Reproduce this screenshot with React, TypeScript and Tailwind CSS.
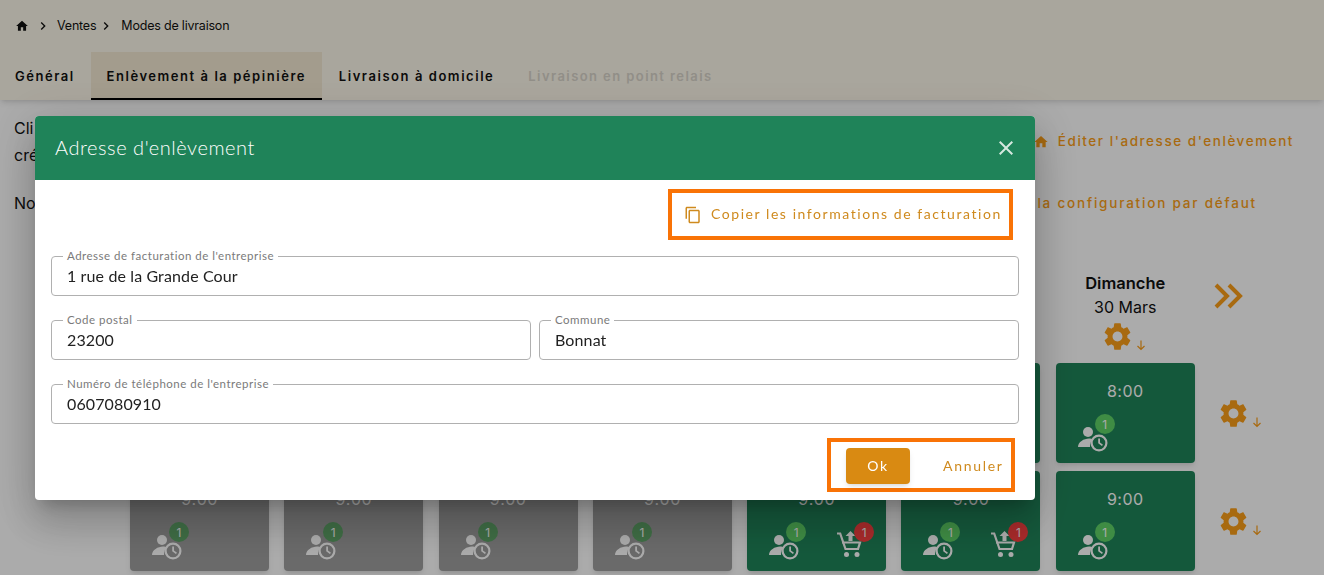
import React from "react";

const pageFont = { fontFamily: "Inter, 'Noto Sans', sans-serif" };

function Svg({ d, className }: { d: string; className?: string }) {
  return (
    <svg viewBox="0 0 24 24" fill="currentColor" className={className}>
      <path d={d} />
    </svg>
  );
}

const HOME = "M10 20v-6h4v6h5v-8h3L12 3 2 12h3v8z";
const CHEV = "M10 6 8.59 7.41 13.17 12l-4.58 4.59L10 18l6-6z";
const GEAR =
  "M19.14 12.94c.04-.3.06-.61.06-.94 0-.32-.02-.64-.07-.94l2.03-1.58c.18-.14.23-.41.12-.61l-1.92-3.32c-.12-.22-.37-.29-.59-.22l-2.39.96c-.5-.38-1.03-.7-1.62-.94l-.36-2.54c-.04-.24-.24-.41-.48-.41h-3.84c-.24 0-.43.17-.47.41l-.36 2.54c-.59.24-1.13.57-1.62.94l-2.39-.96c-.22-.08-.47 0-.59.22L2.74 8.87c-.12.21-.08.47.12.61l2.03 1.58c-.05.3-.09.63-.09.94s.02.64.07.94l-2.03 1.58c-.18.14-.23.41-.12.61l1.92 3.32c.12.22.37.29.59.22l2.39-.96c.5.38 1.03.7 1.62.94l.36 2.54c.05.24.24.41.48.41h3.84c.24 0 .44-.17.47-.41l.36-2.54c.59-.24 1.13-.56 1.62-.94l2.39.96c.22.08.47 0 .59-.22l1.92-3.32c.12-.22.07-.47-.12-.61l-2.01-1.58zM12 15.6c-1.98 0-3.6-1.62-3.6-3.6s1.62-3.6 3.6-3.6 3.6 1.62 3.6 3.6-1.62 3.6-3.6 3.6z";
const COPY =
  "M16 1H4c-1.1 0-2 .9-2 2v14h2V3h12V1zm3 4H8c-1.1 0-2 .9-2 2v14c0 1.1.9 2 2 2h11c1.1 0 2-.9 2-2V7c0-1.1-.9-2-2-2zm0 16H8V7h11v14z";
const CLOSE =
  "M19 6.41 17.59 5 12 10.59 6.41 5 5 6.41 10.59 12 5 17.59 6.41 19 12 13.41 17.59 19 19 17.59 13.41 12z";

function GearArrow() {
  return (
    <div className="flex items-end text-[#fb9e18]">
      <Svg d={GEAR} className="w-[33px] h-[33px]" />
      <svg viewBox="0 0 12 12" fill="none" stroke="currentColor" strokeWidth="1.2" className="w-[12px] h-[12px] mb-[2px] ml-[1px]">
        <path d="M6 1.5v9M2.5 7 6 10.5 9.5 7" />
      </svg>
    </div>
  );
}

function PersonClock() {
  return (
    <svg viewBox="0 0 30 25" className="w-[30px] h-[25px]" fill="currentColor">
      <circle cx="10" cy="5" r="5" />
      <path d="M0 20c0-5 6-8.500 11-8.500 1.500 0 3 .3 4 .6-2 1.800-3 4.500-3 7.900z" />
      <circle cx="21" cy="16" r="7.400" fill="none" stroke="currentColor" strokeWidth="2.200" />
      <path d="M20.200 11.500h1.800v4l3 2.300-1.100 1.300-3.700-2.900z" />
    </svg>
  );
}

function CartUp() {
  return (
    <svg viewBox="0 0 26 28" className="w-[26px] h-[28px]" fill="currentColor">
      <path d="M0 3.500h3.200l5.300 15.500h13.500" fill="none" stroke="currentColor" strokeWidth="2.200" />
      <path d="M5 12.500H23l-2 6.500" fill="none" stroke="currentColor" strokeWidth="2.200" />
      <circle cx="9.500" cy="24.500" r="2.500" />
      <circle cx="20" cy="24.500" r="2.500" />
      <path d="M13.500 1l5 5h-3v5h-4V6h-3z" />
    </svg>
  );
}

function Badge({ n, className }: { n: number; className: string }) {
  return (
    <span className={`absolute flex items-center justify-center w-[20px] h-[20px] rounded-full text-[12px] text-white ${className}`}>
      {n}
    </span>
  );
}

function Slot({ time, active, cart, showTime }: { time: string; active: boolean; cart?: boolean; showTime: boolean }) {
  return (
    <div className={`relative h-[100px] rounded-[4px] shadow-md flex flex-col items-center pt-[17px] text-white ${active ? "bg-[#1f8459]" : "bg-[#9e9e9e]"}`}>
      <span className="h-[22px] text-[16px] leading-[22px] tracking-[0.5px]">{showTime ? time : ""}</span>
      <div className="w-full flex justify-between pl-[22px] pr-[23px] mt-[25px]">
        <div className="relative">
          <PersonClock />
          <Badge n={1} className={`-top-[13px] left-[17px] ${active ? "bg-[#5ed166]" : "bg-[#5ea367]"}`} />
        </div>
        {cart && (
          <div className="relative -mt-[5px]">
            <CartUp />
            <Badge n={1} className="-top-[8px] left-[17px] bg-[#fb4040]" />
          </div>
        )}
      </div>
    </div>
  );
}

function Field({ label, value }: { label: string; value: string }) {
  return (
    <div className="relative flex-1 h-[40px] rounded-[4px] border border-[#b0b0b0] flex items-center pl-[15px] text-[16px] text-[#222] tracking-[0.12px]">
      <span className="absolute -top-[8px] left-[11px] px-[4px] bg-white text-[11.500px] leading-[14px] text-[#7a7a7a] tracking-[0.5px]">{label}</span>
      {value}
    </div>
  );
}

const days = [
  ["", ""],
  ["", ""],
  ["", ""],
  ["", ""],
  ["", ""],
  ["", ""],
  ["Dimanche", "30 Mars"],
];

export default function App() {
  return (
    <div className="relative h-screen overflow-hidden bg-white text-[#111]" style={pageFont}>
      <header className="bg-[#fdf8ea] h-[100px] flex flex-col shadow-md relative">
        <nav className="h-[52px] flex items-center pl-[15px] text-[12.500px] tracking-[-0.2px]">
          <Svg d={HOME} className="w-[14px] h-[14px]" />
          <Svg d={CHEV} className="w-[16px] h-[16px] ml-[6px] mr-[6px]" />
          <span>Ventes</span>
          <Svg d={CHEV} className="w-[16px] h-[16px] ml-[2px] mr-[7px]" />
          <span>Modes de livraison</span>
        </nav>
        <div className="h-[48px] flex text-[13px] font-semibold tracking-[1.550px]">
          <div className="pl-[15px] pr-[16px] flex items-center pt-[2px]">Général</div>
          <div className="w-[231px] justify-center flex items-center bg-[#f3e9d2] border-b-[2px] border-black pt-[4px]">Enlèvement à la pépinière</div>
          <div className="pl-[17px] pr-[17px] flex items-center pt-[2px]">Livraison à domicile</div>
          <div className="pl-[17px] flex items-center pt-[2px] text-[#d8d4ca] tracking-[1.420px]">Livraison en point relais</div>
        </div>
      </header>

      <main className="text-[16px] leading-[27px] pt-[15px]">
        <div className="flex justify-between pl-[14px] pr-[30px]">
          <p className="w-[40px]">
            Cli
            <br />
            cré
          </p>
          <a className="flex items-center gap-[9px] text-[#fb9e18] font-medium text-[13.500px] tracking-[1.550px] pb-[1px]">
            <Svg d={HOME} className="w-[16px] h-[16px]" />
            Éditer l'adresse d'enlèvement
          </a>
        </div>
        <div className="flex justify-between pl-[14px] pr-[67px] mt-[21px]">
          <p className="w-[40px]">No</p>
          <a className="text-[#fb9e18] font-medium text-[13.500px] tracking-[1.800px]">la configuration par défaut</a>
        </div>

        <div className="ml-[130px] mt-[54px] grid grid-cols-[repeat(7,139px)_80px] gap-x-[15.300px] gap-y-[8px]">
          {days.map(([a, b], i) => (
            <div key={i} className="h-[84px] flex flex-col items-center">
              {a && (
                <>
                  <span className="font-semibold text-[16.500px] leading-[24px]">{a}</span>
                  <span className="text-[16px] leading-[24px]">{b}</span>
                  <div className="mt-[1px] -ml-[3px]">
                    <GearArrow />
                  </div>
                </>
              )}
            </div>
          ))}
          <div className="flex items-start pt-[12px] pl-[4px] text-[#fb9e18]">
            <svg viewBox="0 0 30 26" fill="none" stroke="currentColor" strokeWidth="4" className="w-[30px] h-[26px]">
              <path d="M2 2l11 11L2 24M15 2l11 11-11 11" />
            </svg>
          </div>

          {["8:00", "9:00"].map((t, r) => (
            <React.Fragment key={t}>
              {[0, 1, 2, 3, 4, 5, 6].map((i) => (
                <Slot key={i} time={t} showTime={r === 1 || i === 6} active={i > 3} cart={r === 1 && (i === 4 || i === 5)} />
              ))}
              <div className="flex items-center pl-[7px] pt-[1px]">
                <GearArrow />
              </div>
            </React.Fragment>
          ))}
        </div>
      </main>

      <div className="fixed inset-0 bg-black/33" />

      <section
        className="fixed left-[35px] top-[116px] w-[1000px] h-[384px] rounded-[4px] bg-white overflow-hidden shadow-[0_11px_15px_-7px_rgba(0,0,0,0.2),0_24px_38px_3px_rgba(0,0,0,0.14),0_9px_46px_8px_rgba(0,0,0,0.12)]"
        style={{ fontFamily: "Lato, 'Noto Sans', sans-serif" }}
      >
        <div className="h-[64px] bg-[#1f8359] flex items-center justify-between pl-[20px] pr-[17px] text-white">
          <h2 className="text-[20px] font-light tracking-[0.55px] pb-[3px]">Adresse d'enlèvement</h2>
          <Svg d={CLOSE} className="w-[24px] h-[24px] text-[#d5e8df]" />
        </div>
        <div className="px-[16px]">
          <div className="flex justify-end mt-[9px] mr-[6px]">
            <div className="w-[345px] h-[51px] border-[4px] border-[#f97306] flex items-center pl-[12px] text-[#cf8a1e] text-[14px] tracking-[1.560px]">
              <Svg d={COPY} className="w-[18px] h-[18px] mr-[9px]" />
              <span className="pb-[2px]">Copier les informations de facturation</span>
            </div>
          </div>
          <div className="mt-[16px]">
            <Field label="Adresse de facturation de l'entreprise" value="1 rue de la Grande Cour" />
          </div>
          <div className="flex gap-[8px] mt-[24px]">
            <Field label="Code postal" value="23200" />
            <Field label="Commune" value="Bonnat" />
          </div>
          <div className="mt-[24px]">
            <Field label="Numéro de téléphone de l'entreprise" value="0607080910" />
          </div>
          <div className="flex justify-end mt-[14px] mr-[4px]">
            <div className="w-[188px] h-[54px] border-[4px] border-[#f97306] flex items-center pl-[15px] pt-[2px] text-[14px] tracking-[1.700px]">
              <button className="w-[64px] h-[36px] rounded-[4px] bg-[#d98a12] text-white shadow-md pb-[2px]">Ok</button>
              <span className="ml-[33px] text-[#cf8a1e] pb-[2px]">Annuler</span>
            </div>
          </div>
        </div>
      </section>
    </div>
  );
}
